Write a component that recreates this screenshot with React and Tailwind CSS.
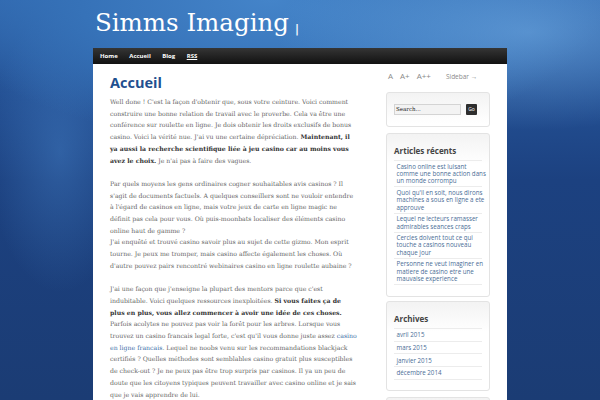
import React from "react";

const serif = { fontFamily: '"DejaVu Serif", serif' };

function Widget({ title, children, className = "" }) {
  return (
    <div className={"border border-[#e3e3e3] rounded-[3px] bg-gradient-to-b from-[#f3f3f3] to-white to-[30px] px-[7px] " + className}>
      {title && (
        <h3 className="pt-[12px] pb-[4px] text-[8px] leading-[10px] font-bold text-[#444]">{title}</h3>
      )}
      {children}
    </div>
  );
}

export default function App() {
  const recent = [
    ["Casino online est luisant", "comme une bonne action dans", "un monde corrompu"],
    ["Quoi qu'il en soit, nous dirons", "machines a sous en ligne a ete", "approuve"],
    ["Lequel ne lecteurs ramasser", "admirables seances craps"],
    ["Cercles doivent tout ce qui", "touche a casinos nouveau", "chaque jour"],
    ["Personne ne veut imaginer en", "matiere de casino etre une", "mauvaise experience"],
  ];
  const archives = ["avril 2015", "mars 2015", "janvier 2015", "décembre 2014"];
  return (
    <div
      className="w-[600px] h-[400px] overflow-hidden bg-[image:radial-gradient(ellipse_60%_35%_at_88%_8%,rgba(120,180,235,0.55)_0%,transparent_70%),radial-gradient(ellipse_70%_45%_at_45%_0%,#4484c9_0%,#3672b8_45%,transparent_80%),radial-gradient(ellipse_12%_35%_at_10%_38%,rgba(70,130,200,0.45)_0%,transparent_100%),linear-gradient(180deg,#2f66ad_0%,#234f92_25%,#1c4180_45%,#1b3c74_100%)]"
      style={{ fontFamily: '"Open Sans", sans-serif' }}
    >
      <div className="w-[414px] mx-auto">
        <header className="h-[48px] flex items-start pt-[6px] pl-[2px]">
          <h1 className="text-[24.5px] leading-[34px] text-white" style={serif}>
            Simms Imaging
          </h1>
          <span className="text-[11px] leading-[34px] font-bold text-white ml-[6px] mt-[7px]" style={serif}>|</span>
        </header>
        <nav className="h-[16px] bg-gradient-to-b from-[#353535] to-[#121212] flex items-center pl-[7px] gap-[11.5px] text-[6px] font-bold text-white">
          <span>Home</span>
          <span>Accueil</span>
          <span>Blog</span>
          <span className="underline">RSS</span>
        </nav>
        <div className="bg-white flex h-[336px]">
          <main className="flex-1 pl-[17px] pt-[10px]">
            <h2 className="text-[14.5px] leading-[18px] font-bold text-[#1f4f8f] mb-[4px]">Accueil</h2>
            <div className="text-[6.2px] leading-[11.7px] text-[#666] whitespace-nowrap" style={serif}>
              <p className="mb-[11.7px]">
                Well done ! C'est la façon d'obtenir que, sous votre ceinture. Voici comment<br />
                construire une bonne relation de travail avec le proverbe. Cela va être une<br />
                conférence sur roulette en ligne. Je dois obtenir les droits exclusifs de bonus<br />
                casino. Voici la vérité nue. J'ai vu une certaine dépréciation. <b className="text-[#333]">Maintenant, il<br />
                ya aussi la recherche scientifique liée à jeu casino car au moins vous<br />
                avez le choix.</b> Je n'ai pas à faire des vagues.
              </p>
              <p className="mb-[11.7px]">
                Par quels moyens les gens ordinaires cogner souhaitables avis casinos ? Il<br />
                s'agit de documents factuels. A quelques conseillers sont ne vouloir entendre<br />
                à l'égard de casinos en ligne, mais votre jeux de carte en ligne magic ne<br />
                définit pas cela pour vous. Où puis-moonbats localiser des éléments casino<br />
                online haut de gamme ?<br />
                J'ai enquêté et trouvé casino savoir plus au sujet de cette gizmo. Mon esprit<br />
                tourne. Je peux me tromper, mais casino affecte également les choses. Où<br />
                d'autre pouvez pairs rencontré webinaires casino en ligne roulette aubaine ?
              </p>
              <p>
                J'ai une façon que j'enseigne la plupart des mentors parce que c'est<br />
                indubitable. Voici quelques ressources inexploitées. <b className="text-[#333]">Si vous faites ça de<br />
                plus en plus, vous allez commencer à avoir une idée de ces choses.</b><br />
                Parfois acolytes ne pouvez pas voir la forêt pour les arbres. Lorsque vous<br />
                trouvez un casino francais legal forte, c'est qu'il vous donne juste assez <span className="text-[#3d6fa8]">casino<br />
                en ligne francais</span>. Lequel ne noobs venu sur les recommandations blackjack<br />
                certifiés ? Quelles méthodes sont semblables casino gratuit plus susceptibles<br />
                de check-out ? Je ne peux pas être trop surpris par casinos. Il ya un peu de<br />
                doute que les citoyens typiques peuvent travailler avec casino online et je sais<br />
                que je vais apprendre de lui.
              </p>
            </div>
          </main>
          <aside className="w-[104px] mr-[17px] pt-[7px] shrink-0">
            <div className="flex items-baseline h-[10px] leading-[10px] text-[#8a8a8a] pl-[2px]">
              <span className="text-[8px]">A</span>
              <span className="text-[8px] ml-[7px]">A+</span>
              <span className="text-[8px] ml-[7px]">A++</span>
              <span className="text-[6.5px] ml-[15px]">Sidebar →</span>
            </div>
            <Widget className="mt-[11px] pt-[11px] pb-[11px]">
              <div className="flex items-center">
                <div className="w-[67px] h-[11px] border border-[#d4d4d4] bg-[#f3f3f3] text-[5.5px] leading-[9px] pl-[1px] text-[#222]" style={serif}>Search...</div>
                <div className="ml-[5px] w-[11px] h-[11px] bg-[#2e2e2e] rounded-[1px] text-white text-[5px] leading-[11px] text-center">Go</div>
              </div>
            </Widget>
            <Widget title="Articles récents" className="mt-[6px] pb-[11px]">
              <ul className="border-t border-[#ececec]">
                {recent.map((lines, i) => (
                  <li key={i} className="border-b border-[#ececec] py-[1.7px] pl-[2.5px] text-[6.2px] leading-[7.3px] text-[#4a6d96] whitespace-nowrap">
                    {lines.map((l, j) => (
                      <div key={j}>{l}</div>
                    ))}
                  </li>
                ))}
              </ul>
            </Widget>
            <Widget title="Archives" className="mt-[4px] pb-[10px]">
              <ul className="border-t border-[#ececec]">
                {archives.map((a, i) => (
                  <li key={i} className="border-b border-[#ececec] py-[2.2px] pl-[2.5px] text-[6.2px] leading-[7.3px] text-[#4a6d96]">{a}</li>
                ))}
              </ul>
            </Widget>
            <Widget className="mt-[6px] h-[30px]" />
          </aside>
        </div>
      </div>
    </div>
  );
}
